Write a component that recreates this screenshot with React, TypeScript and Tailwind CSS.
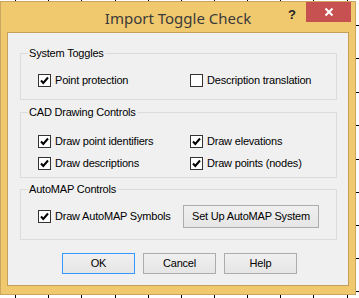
import React from "react";

const tickX = [15, 48, 81, 115, 148, 181, 214, 247, 280, 313, 347];
const tickY = [25, 58, 92, 125, 159, 192, 225, 258, 291];

function Check({ checked, label }: { checked?: boolean; label: string }) {
	return (
		<label className="flex items-center gap-[4px] h-[13px]">
			<span className="w-[13px] h-[13px] border border-[#333333] bg-white flex items-center justify-center shrink-0">
				{checked && (
					<svg width="11" height="11" viewBox="0 0 11 11">
						<path d="M2 5.5 L4.3 8 L9 2.5" stroke="#000" strokeWidth="2" fill="none" />
					</svg>
				)}
			</span>
			<span className="whitespace-nowrap">{label}</span>
		</label>
	);
}

function Group({ title, className, children }: { title: string; className: string; children: React.ReactNode }) {
	return (
		<div className={`relative ml-[12px] w-[317px] border border-[#dcdcdc] ${className}`}>
			<span className="absolute -top-[8px] left-[7px] bg-[#f0f0f0] px-[1px] leading-[14px]">{title}</span>
			{children}
		</div>
	);
}

function Btn({ children, focused, className }: { children: React.ReactNode; focused?: boolean; className?: string }) {
	return (
		<button
			type="button"
			className={`h-[21px] border bg-gradient-to-b from-[#f0f0f0] to-[#e5e5e5] leading-none ${
				focused ? "border-[#3399ff]" : "border-[#acacac]"
			} ${className ?? ""}`}
		>
			{children}
		</button>
	);
}

export default function App() {
	return (
		<div className="relative w-[359px] h-[298px] bg-white pt-[1px] overflow-hidden">
			<svg className="absolute inset-0" width="359" height="298">
				{tickX.map((x) => (
					<line key={"t" + x} x1={x + 0.5} y1={0} x2={x + 0.5} y2={1} stroke="#000" />
				))}
				{tickX.map((x) => (
					<line key={"b" + x} x1={x + 0.5} y1={295} x2={x + 0.5} y2={298} stroke="#000" />
				))}
				{tickY.map((y) => (
					<line key={"r" + y} x1={356} y1={y + 0.5} x2={359} y2={y + 0.5} stroke="#000" />
				))}
			</svg>
			<div
				className="relative w-[356px] h-[294px] border border-[#c9a55f] bg-[#f0c96f] flex flex-col px-[6px] pb-[8px]"
				style={{ fontFamily: '"Liberation Sans", Arial, sans-serif' }}
			>
				<div className="grid grid-cols-[1fr_auto_1fr] h-[30px] -mx-[6px] items-start">
					<div />
					<div
						className="pt-[6px] text-[15px] leading-[20px] text-[#3a3a3a]"
						style={{ fontFamily: '"Noto Sans", "Open Sans", sans-serif' }}
					>
						Import Toggle Check
					</div>
					<div className="flex justify-end items-start pr-[4px]">
						<span className="mt-[6px] mr-[10px] text-[13px] font-bold leading-[13px] text-[#222]">?</span>
						<div className="w-[45px] h-[20px] bg-[#c75050] flex items-center justify-center">
							<svg width="10" height="10" viewBox="0 0 10 10">
								<path d="M1.5 1.5 L8.5 8.5 M8.5 1.5 L1.5 8.5" stroke="#fff" strokeWidth="2" />
							</svg>
						</div>
					</div>
				</div>
				<div className="flex-1 border border-[#c4a15a] bg-[#f0f0f0] flex flex-col text-[11px] text-black tracking-[-0.2px]">
					<Group title="System Toggles" className="mt-[20px] h-[47px]">
						<div className="flex pl-[17px] pt-[20px]">
							<div className="w-[152px]">
								<Check checked label="Point protection" />
							</div>
							<Check label="Description translation" />
						</div>
					</Group>
					<Group title="CAD Drawing Controls" className="mt-[12px] h-[66px]">
						<div className="grid grid-cols-[152px_1fr] pl-[17px] pt-[22px] gap-y-[9px]">
							<Check checked label="Draw point identifiers" />
							<Check checked label="Draw elevations" />
							<Check checked label="Draw descriptions" />
							<Check checked label="Draw points (nodes)" />
						</div>
					</Group>
					<Group title="AutoMAP Controls" className="mt-[11px] h-[51px]">
						<div className="flex items-center pl-[17px] pt-[15px]">
							<div className="w-[145px]">
								<Check checked label="Draw AutoMAP Symbols" />
							</div>
							<Btn className="w-[136px] h-[23px]">Set Up AutoMAP System</Btn>
						</div>
					</Group>
					<div className="flex gap-[8px] ml-[54px] mt-[13px]">
						<Btn focused className="w-[73px]">OK</Btn>
						<Btn className="w-[73px]">Cancel</Btn>
						<Btn className="w-[73px]">Help</Btn>
					</div>
				</div>
			</div>
		</div>
	);
}
